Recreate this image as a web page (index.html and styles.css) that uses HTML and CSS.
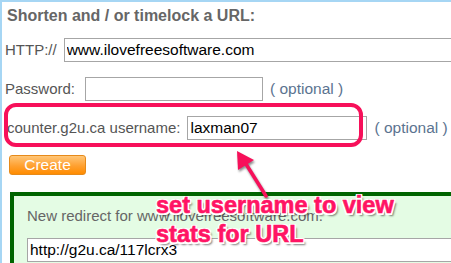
FILE: index.html
```html
<!DOCTYPE html>
<html>
<head>
<meta charset="utf-8">
<link rel="stylesheet" href="styles.css">
</head>
<body>
<div class="page">
  <h1 class="title">Shorten and / or timelock a URL:</h1>
  <div class="row row-http">
    <span class="label">HTTP://</span>
    <input class="field field-url" type="text" value="www.ilovefreesoftware.com">
  </div>
  <div class="row row-pass">
    <span class="label">Password:</span>
    <input class="field field-pass" type="text" value="">
    <span class="opt">( optional )</span>
  </div>
  <div class="row row-user">
    <span class="label">counter.g2u.ca username:</span>
    <input class="field field-user" type="text" value="laxman07">
    <span class="opt">( optional )</span>
  </div>
  <button class="create">Create</button>
  <div class="result">
    <p class="result-text">New redirect for www.ilovefreesoftware.com.</p>
    <input class="field field-short" type="text" value="http://g2u.ca/117lcrx3">
  </div>

  <div class="hl-box"></div>
  <svg class="hl-arrow" width="60" height="60" viewBox="0 0 60 60">
    <g transform="translate(-220,-145)">
      <line x1="246" y1="164" x2="266" y2="196" stroke="#f7105a" stroke-width="3.5" stroke-linecap="round"/>
      <polygon points="237,151 238,170 254,160" fill="#f7105a"/>
    </g>
  </svg>
  <div class="hl-text">set username to view<br>stats for URL</div>
</div>
</body>
</html>
```

FILE: styles.css
```css
html, body {
  margin: 0;
  padding: 0;
  background: #fff;
  overflow: hidden;
}
body {
  width: 451px;
  height: 263px;
  font-family: "Liberation Sans", Arial, sans-serif;
}
.page {
  position: relative;
  height: 263px;
  box-sizing: border-box;
  border-left: 2px solid #a6d6f4;
  border-top: 2px solid #a6d6f4;
  padding: 5px 0 0 3px;
  display: flex;
  flex-direction: column;
  align-items: flex-start;
}
.title {
  margin: 0 0 0 2px;
  font-size: 16px;
  font-weight: bold;
  line-height: 18px;
  color: #666;
}
.row {
  display: flex;
  align-items: center;
  gap: 7px;
  font-size: 15px;
  color: #555;
  white-space: nowrap;
}
.row-http { margin-top: 13px; width: 600px; }
.row-pass { margin-top: 15px; }
.row-pass .label { margin-right: 3px; }
.row-user { margin-top: 15px; margin-left: 2px; }
.label { line-height: 18px; }
.field {
  box-sizing: border-box;
  height: 24px;
  border: 1px solid #a6a6a6;
  padding: 0 2px;
  margin: 0;
  font-family: "Liberation Sans", Arial, sans-serif;
  font-size: 15.5px;
  color: #000;
  background: #fff;
  outline: none;
}
.field-url { width: 420px; }
.field-pass { width: 178px; }
.field-user { width: 180px; }
.opt { color: #5b7390; font-size: 15.5px; }
.create {
  margin: 15px 0 0 4px;
  width: 77px;
  height: 21px;
  border: 1px solid #e68a1a;
  border-radius: 3px;
  background: linear-gradient(#ffc677, #ffa030 55%, #ff8c00);
  color: #fff;
  font-family: "Liberation Sans", Arial, sans-serif;
  font-size: 15.5px;
  line-height: 18px;
  padding: 0;
}
.result {
  margin: 17px 0 0 5px;
  width: 460px;
  height: 80px;
  box-sizing: border-box;
  border-top: 4px solid #006400;
  border-left: 4px solid #006400;
  background: #e4fce4;
  padding: 11px 0 0 13px;
}
.result-text {
  margin: 0;
  font-size: 15px;
  line-height: 18px;
  color: #666;
}
.field-short {
  margin-top: 13px;
  width: 440px;
}
.hl-box {
  position: absolute;
  left: 2px;
  top: 101px;
  width: 359px;
  height: 44px;
  box-sizing: border-box;
  border: 4px solid #f7105a;
  border-radius: 12px;
}
.hl-arrow {
  position: absolute;
  left: 218px;
  top: 143px;
  filter: drop-shadow(1px 2px 1px rgba(0,0,0,0.45));
}
.hl-text {
  position: absolute;
  left: 154px;
  top: 189px;
  font-family: "Liberation Sans", Arial, sans-serif;
  font-weight: bold;
  font-size: 23.5px;
  line-height: 29px;
  color: #ff1464;
  -webkit-text-stroke: 0.6px #ff1464;
  white-space: nowrap;
  text-shadow:
    -1.5px -1.5px 0 #fff, 1.5px -1.5px 0 #fff, -1.5px 1.5px 0 #fff, 1.5px 1.5px 0 #fff,
    0 -1.5px 0 #fff, 0 1.5px 0 #fff, -1.5px 0 0 #fff, 1.5px 0 0 #fff,
    2.5px 2.5px 2px rgba(0,0,0,0.5);
}
```
